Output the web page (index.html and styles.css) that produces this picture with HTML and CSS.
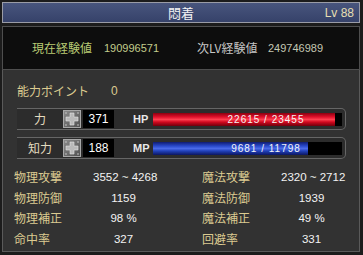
FILE: index.html
```html
<!doctype html>
<html>
<head>
<meta charset="utf-8">
<title>ステータス</title>
<link rel="stylesheet" href="styles.css">
</head>
<body>
<div class="window">
	<div class="titlebar">
		<span class="title">悶着</span>
		<span class="lv">Lv 88</span>
	</div>

	<div class="exp">
		<span class="exp-label now">現在経験値</span>
		<span class="exp-num now-num">190996571</span>
		<span class="exp-label next">次LV経験値</span>
		<span class="exp-num next-num">249746989</span>
	</div>

	<div class="main">
		<div class="points"><span class="gold">能力ポイント</span><b>0</b></div>

		<div class="row">
			<span class="row-label">力</span>
			<span class="plus"><svg width="18" height="18" viewBox="0 0 18 18"><rect x="0.5" y="0.5" width="17" height="17" fill="url(#metal)" stroke="#a8a8a8"/><path d="M7 3h4v4h4v4h-4v4H7v-4H3V7h4z" fill="#b9b9b9" stroke="#e2e2e2" stroke-width="0.6"/><circle cx="3" cy="3" r="0.8" fill="#ccc"/><circle cx="15" cy="3" r="0.8" fill="#ccc"/><circle cx="3" cy="15" r="0.8" fill="#ccc"/><circle cx="15" cy="15" r="0.8" fill="#ccc"/><defs><linearGradient id="metal" x1="0" y1="0" x2="1" y2="1"><stop offset="0" stop-color="#8c8c8c"/><stop offset="1" stop-color="#505050"/></linearGradient></defs></svg></span>
			<span class="value">371</span>
			<span class="bar-name">HP</span>
			<div class="bar">
				<div class="fill hp" style="width:96.4%"></div>
				<span class="bar-text">22615 / 23455</span>
			</div>
		</div>

		<div class="row">
			<span class="row-label">知力</span>
			<span class="plus"><svg width="18" height="18" viewBox="0 0 18 18"><rect x="0.5" y="0.5" width="17" height="17" fill="url(#metal2)" stroke="#a8a8a8"/><path d="M7 3h4v4h4v4h-4v4H7v-4H3V7h4z" fill="#b9b9b9" stroke="#e2e2e2" stroke-width="0.6"/><circle cx="3" cy="3" r="0.8" fill="#ccc"/><circle cx="15" cy="3" r="0.8" fill="#ccc"/><circle cx="3" cy="15" r="0.8" fill="#ccc"/><circle cx="15" cy="15" r="0.8" fill="#ccc"/><defs><linearGradient id="metal2" x1="0" y1="0" x2="1" y2="1"><stop offset="0" stop-color="#8c8c8c"/><stop offset="1" stop-color="#505050"/></linearGradient></defs></svg></span>
			<span class="value">188</span>
			<span class="bar-name">MP</span>
			<div class="bar">
				<div class="fill mp" style="width:82%"></div>
				<span class="bar-text">9681 / 11798</span>
			</div>
		</div>

		<div class="stats">
			<div class="col">
				<span class="gold">物理攻撃</span><span class="num">3552 ~ 4268</span>
				<span class="gold">物理防御</span><span class="num">1159</span>
				<span class="gold">物理補正</span><span class="num">98 %</span>
				<span class="gold">命中率</span><span class="num">327</span>
			</div>
			<div class="col">
				<span class="gold">魔法攻撃</span><span class="num">2320 ~ 2712</span>
				<span class="gold">魔法防御</span><span class="num">1939</span>
				<span class="gold">魔法補正</span><span class="num">49 %</span>
				<span class="gold">回避率</span><span class="num">331</span>
			</div>
		</div>
	</div>
</div>
</body>
</html>
```

FILE: styles.css
```css
*{ margin:0; padding:0; box-sizing:border-box}
body{ background:#1a1a1a; font-family:"Liberation Sans", "Noto Sans CJK JP", sans-serif; font-size:12px}

.window{ width:363px; height:255px; padding:2px 3px 3px 2px; background:#1c1c1c; display:flex; flex-direction:column}

.titlebar{ height:21px; position:relative; border:1px solid #9a9ca6; background:linear-gradient(#48557d, #36426a); display:flex; align-items:center; justify-content:center}
.title{ color:#f4f4f4; font-size:13px; font-family:"Noto Sans CJK JP", sans-serif; line-height:1}
.lv{ position:absolute; right:5px; top:3px; color:#e6dfb2; font-size:12px}

.exp{ margin-top:3px; height:44px; background:#0d0d0d; border:1px solid #4e4e4e; display:flex; align-items:center; padding-left:29px}
.exp-label{ font-family:"Noto Sans CJK JP", sans-serif; font-size:12px; line-height:1}
.exp-num{ font-size:11px; line-height:1}
.now{ color:#b9cb74; width:72px}
.now-num{ color:#c2cc8c; width:93px}
.next{ color:#c6c6c6; width:71px}
.next-num{ color:#c4c8b4}

.main{ flex:1; background:#323232; border:1px solid #5a5a5a; border-top:none; padding:13px 13px 0 14px}
.main .points{ height:16px; display:flex; align-items:center; padding-left:0}
.gold{ color:#dccb91; font-family:"Noto Sans CJK JP", sans-serif; font-size:12px; line-height:1; white-space:nowrap}
.points .gold{ width:94px}
.points b{ color:#dccb91; font-weight:normal; font-size:12px}

.row{ height:22px; margin-top:9px; display:flex; align-items:center; border:1px solid #666; border-left:none; border-radius:0 5px 5px 0; background:#2c2c2c}
.row + .row{ margin-top:7px}
.row-label{ width:46px; text-align:center; color:#e4dcc0; font-family:"Noto Sans CJK JP", sans-serif; font-size:12px; line-height:1}
.plus{ width:18px; height:18px; display:block}
.plus svg{ display:block}
.value{ width:31px; height:18px; margin-left:2px; background:#000; color:#fff; text-align:center; line-height:18px; font-size:12px}
.bar-name{ width:20px; margin-left:19px; color:#e8e8e8; font-size:11px; font-weight:bold}
.bar{ width:189px; height:13px; position:relative; background:#000}
.fill{ height:100%}
.fill.hp{ background:linear-gradient(#8a0010, #e0102a 30%, #ff4050 50%, #d0081e 70%, #70000c)}
.fill.mp{ background:linear-gradient(#101c70, #2848c8 30%, #4a6ae8 50%, #2040b8 70%, #0c1660)}
.bar-text{ position:absolute; top:0; left:0; right:0; padding-left:37px; text-align:center; color:#f4f4f4; font-size:10px; letter-spacing:1px; line-height:13px}

.stats{ display:flex; gap:48px; margin-top:8px; margin-left:-3px}
.col{ display:grid; grid-template-columns:79px 61px; grid-auto-rows:20.5px; align-items:center}
.num{ text-align:center; color:#f2f2f2; font-size:11.5px; white-space:nowrap}
```
